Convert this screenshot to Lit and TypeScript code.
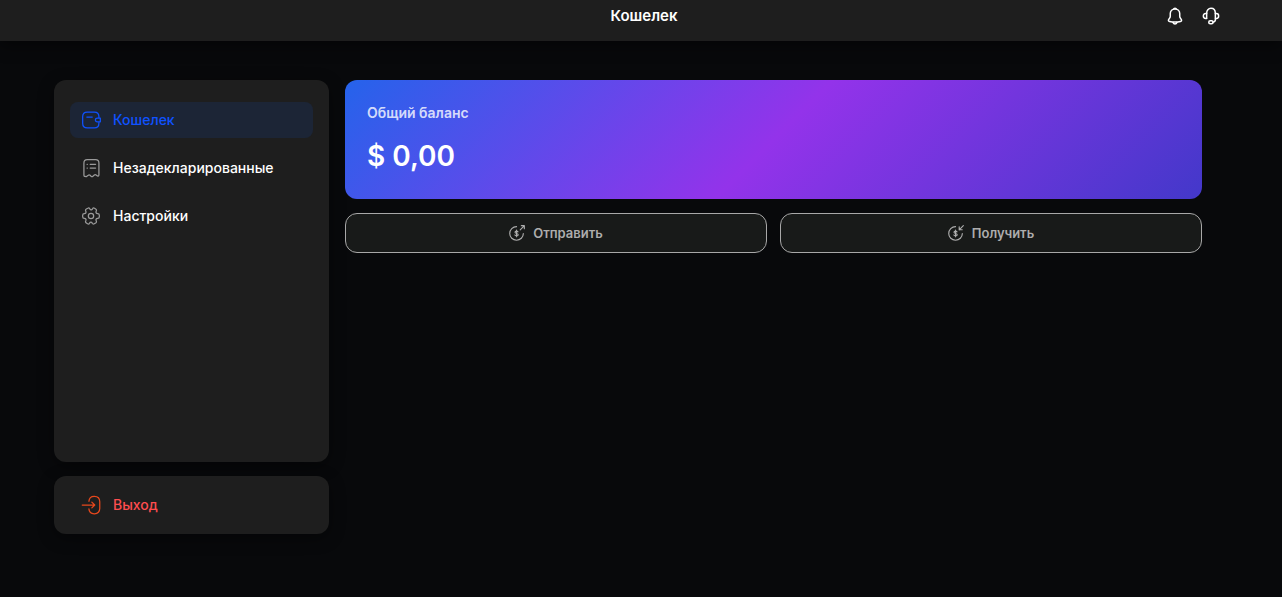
import { css, html, LitElement, svg } from "lit";
import { customElement, property } from "lit/decorators.js";

// dollar sign shared by the send and receive icons
const dollar = svg`
    <path d="M13.500 10.200c-.5-.7-1.200-1-2.200-1-1.400 0-2.300.7-2.300 1.700 0 2.600 4.800 1.100 4.800 3.600 0 1.100-1 1.800-2.500 1.800-1.200 0-2-.4-2.500-1.200M11.300 7.700v10"/>`;

const icons = {
    bell: svg`
        <path d="M12 2.500c-3.600 0-6.300 2.700-6.300 6.300v3.400c0 .9-.4 1.800-.9 2.600l-1.300 2.100c-.6 1.200-.1 2 1.200 2.300 4.800 1 9.800 1 14.600 0 1.300-.3 1.800-1.100 1.200-2.300l-1.300-2.100c-.5-.8-.9-1.700-.9-2.600V8.800c0-3.600-2.700-6.300-6.300-6.300Z"/>
        <path d="M9.300 20.500c.6 1.400 1.500 2 2.700 2s2.100-.6 2.700-2M10.500 2.200c1-.6 2-.6 3 0"/>`,
    support: svg`
        <path d="M6.200 15V8.500C6.200 4.500 8.500 1.800 12 1.800s5.800 2.700 5.800 6.700V15M18 16c0 2.500-1.300 4-3.500 4.300"/>
        <path d="M6.200 8.800H4.800C2.800 8.800 1.800 10 1.800 12s1 3.200 3 3.200h1.400M17.800 8.800h1.400c2 0 3 1.200 3 3.200s-1 3.200-3 3.200h-1.400"/>
        <rect x="9" y="18.300" width="5.800" height="4" rx="2"/>`,
    wallet: svg`
        <path d="M21.500 9V8c0-3.400-2-5.500-5.500-5.500H7.500C4 2.500 2 4.600 2 8v8c0 3.400 2 5.500 5.500 5.500H16c3.500 0 5.500-2.100 5.500-5.500v-1"/>
        <path d="M23.200 9.800v4.400h-3.500c-1.400 0-2.400-.9-2.400-2.200s1-2.200 2.400-2.200ZM7 8.500h6.500"/>`,
    bill: svg`
        <path d="M3.500 20V6c0-2.800 1.200-4 4-4h10c2.800 0 4 1.200 4 4v14c0 2-1.300 2.300-2.600 1.100l-.8-.7c-.7-.6-1.500-.6-2.100.1l-1.700 1.400c-.7.6-1.500.6-2.200 0l-1.200-1.200c-.7-.7-1.500-.7-2.200 0L7 22c-.6.6-1.200.6-1.800 0-1 .5-1.700 0-1.700-2Z"/>
        <path d="M11 7.500h6.500M11 12h6.500M7.300 7.500h.3M7.300 12h.3"/>`,
    settings: svg`
        <circle cx="12" cy="12" r="3.200"/>
        <path d="M2 12.900v-1.800c0-1.100.9-2 2-2 1.800 0 2.600-1.300 1.700-2.900-.6-.9-.2-2.100.7-2.600L8.100 2.600c.8-.5 1.900-.2 2.400.6l.1.200c.9 1.600 2.300 1.600 3.200 0l.1-.2c.5-.8 1.500-1.100 2.300-.6l1.400 1c.9.500 1.200 1.700.7 2.600-.9 1.600-.1 2.900 1.700 2.900 1.100 0 2 .9 2 2v1.800c0 1.100-.9 2-2 2-1.800 0-2.600 1.300-1.700 2.900.5.900.2 2.100-.7 2.600l-1.700 1c-.8.500-1.800.2-2.300-.6l-.1-.2c-.9-1.600-2.300-1.600-3.200 0l-.1.200c-.5.800-1.500 1.100-2.300.6l-1.500-1c-.9-.5-1.300-1.700-.7-2.600.9-1.600.1-2.900-1.700-2.900-1.100 0-2-.9-2-2Z"/>`,
    logout: svg`
        <path d="M9.500 7.500c.3-4.200 2.200-6 6.300-6h.2c4.700 0 6.500 1.900 6.500 6.500v8c0 4.600-1.800 6.500-6.500 6.500h-.2c-4 0-6-1.700-6.300-5.800"/>
        <path d="M1.500 12H16M13 8.500l3.500 3.500-3.500 3.500"/>`,
    send: svg`
        <path d="M21.500 12.700A10.200 10.200 0 1 1 11.300 2.500"/>
        <path d="M16.800 7.200 23 1M18.500 1H23v4.500"/>
        ${dollar}`,
    receive: svg`
        <path d="M21.500 12.700A10.200 10.200 0 1 1 11.300 2.500"/>
        <path d="M23 1 16.800 7.200M16.800 2.700v4.500h4.500"/>
        ${dollar}`,
};

const menu = [
    { icon: "wallet", label: "Кошелек", href: "#wallet" },
    { icon: "bill", label: "Незадекларированные", href: "#undeclared" },
    { icon: "settings", label: "Настройки", href: "#settings" },
];

@customElement("wallet-icon")
class WalletIcon extends LitElement {
    @property() name = "wallet";

    render() {
        return html`
            <svg viewBox="0 0 24 24" aria-hidden="true">${icons[this.name]}</svg>
        `;
    }

    static styles = css`
        :host {
            display: block;
            flex: none;
            width: 20px;
            height: 20px;
        }

        svg {
            display: block;
            width: 100%;
            height: 100%;
            overflow: visible;
            fill: none;
            stroke: currentColor;
            stroke-width: var(--icon-stroke, 1.5);
            stroke-linecap: round;
            stroke-linejoin: round;
        }
    `;
}

@customElement("app-root")
class AppRoot extends LitElement {
    @property() active = "#wallet";

    render() {
        return html`
            <header class="topbar">
                <h1 class="title">Кошелек</h1>
                <div class="tools">
                    <button class="tool" aria-label="Уведомления">
                        <wallet-icon name="bell"></wallet-icon>
                    </button>
                    <button class="tool" aria-label="Поддержка">
                        <wallet-icon name="support"></wallet-icon>
                    </button>
                </div>
            </header>
            <div class="page">
                <aside class="sidebar">
                    <nav class="panel menu">
                        ${menu.map((item) => html`
                            <a
                                class="item ${item.href === this.active ? "active" : ""}"
                                href=${item.href}
                                @click=${() => (this.active = item.href)}
                            >
                                <wallet-icon name=${item.icon}></wallet-icon>
                                ${item.label}
                            </a>
                        `)}
                    </nav>
                    <div class="panel exit">
                        <button class="item logout">
                            <wallet-icon name="logout"></wallet-icon>
                            Выход
                        </button>
                    </div>
                </aside>
                <main class="content">
                    <section class="balance">
                        <h2 class="caption">Общий баланс</h2>
                        <p class="amount">$ 0,00</p>
                    </section>
                    <div class="actions">
                        <button class="action">
                            <wallet-icon name="send"></wallet-icon>
                            Отправить
                        </button>
                        <button class="action">
                            <wallet-icon name="receive"></wallet-icon>
                            Получить
                        </button>
                    </div>
                </main>
            </div>
        `;
    }

    static styles = css`
        :host {
            display: block;
            box-sizing: border-box;
            min-height: 100vh;
            background: #08090b;
            color: #ffffff;
            font-family: Inter, "Liberation Sans", sans-serif;
        }

        * {
            box-sizing: border-box;
        }

        h1, h2, p {
            margin: 0;
        }

        button {
            font-family: inherit;
            cursor: pointer;
        }

        .topbar {
            display: grid;
            grid-template-columns: 1fr auto 1fr;
            align-items: center;
            padding: 6px 62px 15px 68px;
            background: #1e1e1e;
            box-shadow: 0 4px 16px rgba(0, 0, 0, 0.5);
        }

        .title {
            grid-column: 2;
            font-size: 15px;
            line-height: 20px;
            font-weight: 600;
        }

        .tools {
            display: flex;
            justify-content: flex-end;
            gap: 18px;
            --icon-stroke: 2;
        }

        .tool {
            display: flex;
            padding: 0;
            border: 0;
            background: none;
            color: #ffffff;
        }

        .tools wallet-icon {
            width: 18px;
            height: 18px;
        }

        .page {
            display: flex;
            align-items: flex-start;
            gap: 16px;
            padding: 39px 80px 40px 54px;
        }

        .sidebar {
            display: flex;
            flex-direction: column;
            flex: 0 0 275px;
            gap: 14px;
        }

        .panel {
            border-radius: 12px;
            background: #1e1e1e;
            box-shadow: 0 4px 16px rgba(0, 0, 0, 0.4);
        }

        .menu {
            display: flex;
            flex-direction: column;
            gap: 12px;
            min-height: 382px;
            padding: 22px 16px;
        }

        .exit {
            padding: 11px 16px;
        }

        .item {
            display: flex;
            align-items: center;
            gap: 12px;
            width: 100%;
            padding: 8px 11px;
            border: 0;
            border-radius: 8px;
            background: none;
            color: #ffffff;
            font-size: 14px;
            line-height: 20px;
            font-weight: 500;
            text-decoration: none;
        }

        .item wallet-icon {
            color: #9a9a9a;
        }

        .active,
        .active wallet-icon {
            color: #0f52ff;
        }

        .active {
            background: #1c2536;
        }

        .logout {
            color: #ff4d4f;
        }

        .logout wallet-icon {
            color: #e8481c;
        }

        .content {
            display: flex;
            flex: 1;
            flex-direction: column;
            gap: 14px;
            min-width: 0;
        }

        .balance {
            padding: 23px 22px;
            border-radius: 12px;
            background: linear-gradient(135deg, #2563eb, #9333ea 50%, #4338ca);
        }

        .caption {
            color: rgba(255, 255, 255, 0.8);
            font-size: 14px;
            line-height: 20px;
            font-weight: 600;
        }

        .amount {
            margin-top: 13px;
            font-size: 28px;
            line-height: 40px;
            font-weight: 600;
        }

        .actions {
            display: grid;
            grid-template-columns: 1fr 1fr;
            gap: 13px;
        }

        .action {
            display: flex;
            align-items: center;
            justify-content: center;
            gap: 8px;
            height: 40px;
            border: 1px solid #a8a8a8;
            border-radius: 12px;
            background: #181a19;
            color: #adadad;
            font-size: 13px;
            line-height: 20px;
            font-weight: 600;
            --icon-stroke: 1.7;
        }

        .action wallet-icon {
            width: 16px;
            height: 16px;
        }
    `;
}
